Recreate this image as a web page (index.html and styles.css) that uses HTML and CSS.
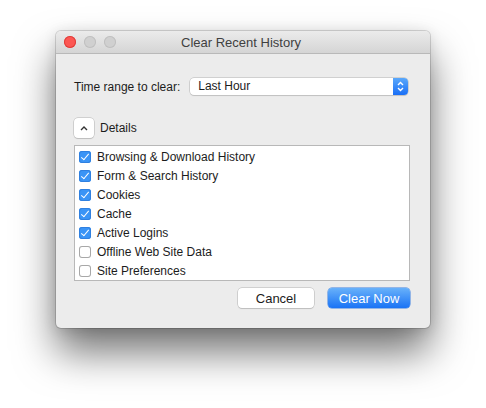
FILE: index.html
```html
<!DOCTYPE html>
<html lang="en">

<head>
    <meta charset="UTF-8">
    <title>Clear Recent History</title>
    <link rel="stylesheet" href="styles.css">
</head>

<body>
    <div class="window">
        <div class="titlebar">
            <div class="lights">
                <span class="light red"></span>
                <span class="light"></span>
                <span class="light"></span>
            </div>
            <div class="title">Clear Recent History</div>
        </div>

        <div class="content">
            <div class="range-row">
                <label>Time range to clear:</label>
                <div class="select">
                    <span class="select-value">Last Hour</span>
                    <span class="select-arrows">
                        <svg width="9" height="13" viewBox="0 0 9 13">
                            <path d="M2 5 L4.5 2.5 L7 5 M2 8 L4.5 10.5 L7 8" fill="none" stroke="#fff" stroke-width="1.4" />
                        </svg>
                    </span>
                </div>
            </div>

            <div class="details-row">
                <span class="disclosure">
                    <svg width="10" height="7" viewBox="0 0 10 7">
                        <path d="M2 5 L5 2 L8 5" fill="none" stroke="#333" stroke-width="1.4" />
                    </svg>
                </span>
                <span>Details</span>
            </div>

            <div class="list">
                <div class="item"><span class="box checked"></span>Browsing &amp; Download History</div>
                <div class="item"><span class="box checked"></span>Form &amp; Search History</div>
                <div class="item"><span class="box checked"></span>Cookies</div>
                <div class="item"><span class="box checked"></span>Cache</div>
                <div class="item"><span class="box checked"></span>Active Logins</div>
                <div class="item"><span class="box"></span>Offline Web Site Data</div>
                <div class="item"><span class="box"></span>Site Preferences</div>
            </div>

            <div class="buttons">
                <button class="btn">Cancel</button>
                <button class="btn primary">Clear Now</button>
            </div>
        </div>
    </div>
</body>

</html>
```

FILE: styles.css
```css
html, body {
    height: 100%;
}

body {
    margin: 0;
    padding: 31px 0 0 56px;
    box-sizing: border-box;
    background-color: #ffffff;
    font-family: 'Liberation Sans', Arial, sans-serif;
    font-size: 12px;
    color: #1c1c1c;
}

.window {
    width: 374px;
    height: 297px;
    background-color: #ececec;
    border-radius: 5px;
    box-shadow: 0 0 0 1px rgba(0, 0, 0, 0.14), 0 24px 40px rgba(0, 0, 0, 0.55), 0 2px 14px rgba(0, 0, 0, 0.12);
    overflow: hidden;
}

.titlebar {
    height: 22px;
    background: linear-gradient(#ebebeb, #d5d5d5);
    border-bottom: 1px solid #b9b9b9;
    display: flex;
    align-items: center;
}

.lights {
    display: flex;
    gap: 8px;
    padding-left: 8px;
}

.light {
    width: 12px;
    height: 12px;
    border-radius: 50%;
    background-color: #d0d0d0;
    box-shadow: inset 0 0 0 1px #c0c0c0;
}

.light.red {
    background-color: #fc5753;
    box-shadow: inset 0 0 0 1px #df3e3a;
}

.title {
    flex: 1;
    text-align: center;
    font-size: 13px;
    color: #404040;
    margin-right: 64px;
}

.content {
    padding: 24px 20px 0 18px;
}

.range-row {
    display: flex;
    align-items: center;
    gap: 10px;
    height: 17px;
    margin-right: 2px;
}

.select {
    flex: 1;
    height: 17px;
    display: flex;
    background-color: #ffffff;
    border-radius: 4px;
    box-shadow: 0 0 0 0.5px #b4b4b4, 0 1px 1px rgba(0, 0, 0, 0.12);
    overflow: hidden;
}

.select-value {
    flex: 1;
    padding-left: 8px;
    line-height: 17px;
}

.select-arrows {
    width: 15px;
    display: flex;
    align-items: center;
    justify-content: center;
    background: linear-gradient(#5aa8fb, #1a6ff6);
}

.details-row {
    display: flex;
    align-items: center;
    gap: 6px;
    margin-top: 23px;
}

.disclosure {
    width: 20px;
    height: 20px;
    border-radius: 4px;
    background-color: #ffffff;
    box-shadow: 0 0 0 0.5px #b4b4b4, 0 1px 1px rgba(0, 0, 0, 0.15);
    display: flex;
    align-items: center;
    justify-content: center;
}

.list {
    margin-top: 7px;
    height: 133px;
    background-color: #ffffff;
    border: 1px solid #b8b8b8;
    padding-top: 1px;
}

.item {
    height: 19px;
    display: flex;
    align-items: center;
    gap: 6px;
    padding-left: 4px;
}

.box {
    width: 12px;
    height: 12px;
    border-radius: 3px;
    background-color: #ffffff;
    box-shadow: inset 0 0 0 1px #a8a8a8;
    position: relative;
}

.box.checked {
    background-color: #3a94f6;
    box-shadow: inset 0 0 0 1px #2f80e0;
}

.box.checked::after {
    content: "";
    position: absolute;
    left: 4px;
    top: 1px;
    width: 3px;
    height: 7px;
    border: solid #ffffff;
    border-width: 0 1.6px 1.6px 0;
    transform: rotate(40deg);
}

.buttons {
    display: flex;
    justify-content: flex-end;
    gap: 14px;
    margin-top: 7px;
}

.btn {
    font-family: 'Liberation Sans', Arial, sans-serif;
    font-size: 13px;
    height: 20px;
    padding: 0;
    border: none;
    border-radius: 4px;
    background-color: #ffffff;
    color: #1c1c1c;
    box-shadow: 0 0 0 0.5px #b4b4b4, 0 1px 1px rgba(0, 0, 0, 0.15);
    width: 76px;
}

.btn.primary {
    width: 82px;
    color: #ffffff;
    background: linear-gradient(#68b1fa, #1a73f5);
    box-shadow: 0 0 0 0.5px #3b7fe0;
}
```
